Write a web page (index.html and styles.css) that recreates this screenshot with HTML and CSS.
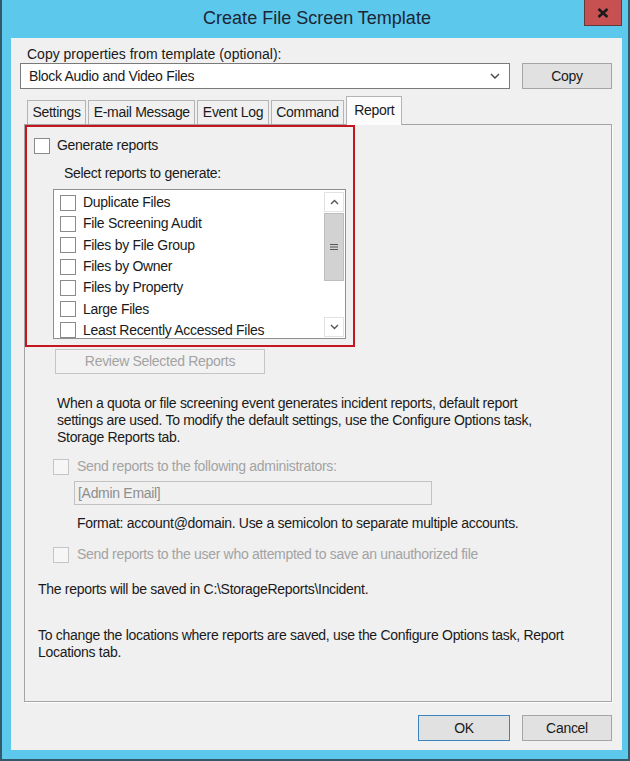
FILE: index.html
```html
<!DOCTYPE html>
<html lang="en">
<head>
    <meta charset="UTF-8">
    <title>Create File Screen Template</title>
    <link rel="stylesheet" href="styles.css">
</head>
<body>

    <!-- Dialog frame -->
    <div class="window">
        <div class="titlebar">
            <span class="title">Create File Screen Template</span>
            <div class="close-btn">
                <svg width="12" height="10" viewBox="0 0 12 10">
                    <path d="M1.5 1 L10.5 9 M10.5 1 L1.5 9" stroke="#1b1b1b" stroke-width="2.6" fill="none"/>
                </svg>
            </div>
        </div>

        <div class="client">
            <div class="copy-label">Copy properties from template (optional):</div>
            <div class="copy-row">
                <div class="combo">
                    <span>Block Audio and Video Files</span>
                    <svg width="10" height="6" viewBox="0 0 10 6">
                        <path d="M1 1 L5 5 L9 1" stroke="#444" stroke-width="1.4" fill="none"/>
                    </svg>
                </div>
                <div class="btn copy-btn">Copy</div>
            </div>

            <!-- Tabs -->
            <div class="tabs">
                <div class="tab">Settings</div>
                <div class="tab">E-mail Message</div>
                <div class="tab">Event Log</div>
                <div class="tab">Command</div>
                <div class="tab active">Report</div>
            </div>

            <div class="panel">
                <div class="highlight">
                    <div class="check-row">
                        <span class="checkbox"></span>
                        <span>Generate reports</span>
                    </div>
                    <div class="select-label">Select reports to generate:</div>

                    <div class="listbox">
                        <div class="list-items">
                            <div class="list-item"><span class="checkbox"></span>Duplicate Files</div>
                            <div class="list-item"><span class="checkbox"></span>File Screening Audit</div>
                            <div class="list-item"><span class="checkbox"></span>Files by File Group</div>
                            <div class="list-item"><span class="checkbox"></span>Files by Owner</div>
                            <div class="list-item"><span class="checkbox"></span>Files by Property</div>
                            <div class="list-item"><span class="checkbox"></span>Large Files</div>
                            <div class="list-item"><span class="checkbox"></span>Least Recently Accessed Files</div>
                        </div>
                        <div class="scrollbar">
                            <div class="sb-btn">
                                <svg width="9" height="6" viewBox="0 0 9 6">
                                    <path d="M1 5 L4.5 1.5 L8 5" stroke="#555" stroke-width="1.4" fill="none"/>
                                </svg>
                            </div>
                            <div class="sb-thumb">
                                <svg width="8" height="8" viewBox="0 0 8 8">
                                    <path d="M0 1.5 H8 M0 4 H8 M0 6.5 H8" stroke="#555" stroke-width="1.2"/>
                                </svg>
                            </div>
                            <div class="sb-track"></div>
                            <div class="sb-btn">
                                <svg width="9" height="6" viewBox="0 0 9 6">
                                    <path d="M1 1 L4.5 4.5 L8 1" stroke="#555" stroke-width="1.4" fill="none"/>
                                </svg>
                            </div>
                        </div>
                    </div>
                </div>

                <div class="btn disabled review-btn">Review Selected Reports</div>

                <p class="info">
                    When a quota or file screening event generates incident reports, default report<br>
                    settings are used. To modify the default settings, use the Configure Options task,<br>
                    Storage Reports tab.
                </p>

                <div class="check-row disabled admin-row">
                    <span class="checkbox"></span>
                    <span>Send reports to the following administrators:</span>
                </div>
                <div class="textbox">[Admin Email]</div>
                <div class="format-note">Format: account@domain. Use a semicolon to separate multiple accounts.</div>

                <div class="check-row disabled user-row">
                    <span class="checkbox"></span>
                    <span>Send reports to the user who attempted to save an unauthorized file</span>
                </div>

                <div class="saved-note">The reports will be saved in C:\StorageReports\Incident.</div>
                <div class="locations-note">
                    To change the locations where reports are saved, use the Configure Options task, Report<br>
                    Locations tab.
                </div>
            </div>

            <div class="footer">
                <div class="btn default ok-btn">OK</div>
                <div class="btn cancel-btn">Cancel</div>
            </div>
        </div>
    </div>

</body>
</html>
```

FILE: styles.css
```css
/* ===== General ===== */
body {
    margin: 0;
    font-family: "Liberation Sans", Arial, sans-serif;
    font-size: 14px;
    letter-spacing: -0.3px;
    line-height: 17px;
    color: #1a1a1a;
}

/* ===== Window frame ===== */
.window {
    width: 630px;
    height: 761px;
    box-sizing: border-box;
    background: #5cc8ec;
    border: 2px solid #34596b;
    border-top: none;
    display: flex;
    flex-direction: column;
}

.titlebar {
    height: 38px;
    position: relative;
    display: flex;
    justify-content: center;
    align-items: center;
}

.title {
    font-size: 18px;
    letter-spacing: 0;
    color: #1d2535;
    padding: 0 0 1px 4px;
}

.close-btn {
    position: absolute;
    top: 0;
    right: 6px;
    width: 38px;
    height: 26px;
    box-sizing: border-box;
    background: #c75050;
    border: 1px solid #5f3a3a;
    border-top: none;
    display: flex;
    justify-content: center;
    align-items: center;
}

.client {
    flex: 1;
    margin: 0 6px 9px 9px;
    background: #f0f0f0;
    padding: 8px 10px 0 9px;
}

/* ===== Copy row ===== */
.copy-label {
    margin-left: 7px;
    letter-spacing: 0;
}

.copy-row {
    display: flex;
    gap: 12px;
    height: 26px;
}

.combo {
    width: 490px;
    box-sizing: border-box;
    background: #fff;
    border: 1px solid #7a7a7a;
    display: flex;
    align-items: center;
    justify-content: space-between;
    padding: 0 9px 0 8px;
}

.btn {
    box-sizing: border-box;
    background: #e1e1e1;
    border: 1px solid #a5a5a5;
    display: flex;
    align-items: center;
    justify-content: center;
}

.copy-btn {
    width: 90px;
}

/* ===== Tabs ===== */
.tabs {
    display: flex;
    align-items: flex-end;
    gap: 2px;
    height: 28px;
    margin: 7px 0 0 7px;
    position: relative;
    z-index: 1;
}

.tab {
    height: 24px;
    box-sizing: border-box;
    padding: 0 4.5px;
    border: 1px solid #b4b4b4;
    border-bottom: none;
    background: #f0f0f0;
    display: flex;
    align-items: center;
}

.tab.active {
    height: 29px;
    margin-bottom: -1px;
    background: #fcfcfc;
    align-items: flex-start;
    padding: 5px 7px 0;
}

/* ===== Tab page ===== */
.panel {
    height: 578px;
    box-sizing: border-box;
    margin-left: 4px;
    border: 1px solid #a4a4a4;
    box-shadow: 1px 1px 0 #fff;
}

.highlight {
    width: 330px;
    height: 222px;
    box-sizing: border-box;
    border: 2px solid #c3161f;
    padding: 10px 7px 0;
}

.check-row {
    display: flex;
    align-items: center;
    gap: 7px;
    height: 17px;
}

.checkbox {
    width: 16px;
    height: 16px;
    box-sizing: border-box;
    background: #fff;
    border: 1px solid #8a8a8a;
    flex-shrink: 0;
}

.select-label {
    margin: 11px 0 0 30px;
}

.listbox {
    margin: 7px 0 0 19px;
    height: 150px;
    box-sizing: border-box;
    background: #fff;
    border: 1px solid #8c8f94;
    display: flex;
    overflow: hidden;
}

.list-items {
    flex: 1;
    padding-top: 2px;
    overflow: hidden;
}

.list-item {
    height: 21.3px;
    display: flex;
    align-items: center;
    gap: 7px;
    padding-left: 6px;
    white-space: nowrap;
}

/* ===== Scrollbar ===== */
.scrollbar {
    width: 21px;
    display: flex;
    flex-direction: column;
    padding: 2px 1px 1px 0;
    box-sizing: border-box;
}

.sb-btn {
    height: 20px;
    box-sizing: border-box;
    border: 1px solid #e2e2e2;
    display: flex;
    align-items: center;
    justify-content: center;
}

.sb-thumb {
    height: 68px;
    margin-top: 1px;
    box-sizing: border-box;
    background: #d2d2d2;
    border: 1px solid #bdbdbd;
    display: flex;
    align-items: center;
    justify-content: center;
}

.sb-track {
    flex: 1;
}

/* ===== Lower part ===== */
.btn.disabled {
    color: #a3a3a3;
    background: #f2f2f2;
    border-color: #c4c4c4;
}

.review-btn {
    width: 210px;
    height: 25px;
    margin: 2px 0 0 30px;
}

.info {
    margin: 21px 0 0 32px;
}

.check-row.disabled {
    color: #a3a3a3;
    gap: 8px;
}

.check-row.disabled .checkbox {
    background: #f6f6f6;
    border-color: #c6c6c6;
}

.admin-row {
    margin: 12px 0 0 28px;
}

.textbox {
    width: 358px;
    height: 24px;
    box-sizing: border-box;
    margin: 6px 0 0 49px;
    border: 1px solid #c2c2c2;
    color: #8e8e8e;
    padding-left: 3px;
    display: flex;
    align-items: center;
}

.format-note {
    margin: 10px 0 0 52px;
}

.user-row {
    margin: 14px 0 0 28px;
}

.saved-note {
    margin: 18px 0 0 13px;
}

.locations-note {
    margin: 29px 0 0 13px;
}

/* ===== Footer buttons ===== */
.footer {
    display: flex;
    justify-content: flex-end;
    gap: 12px;
    margin-top: 13px;
}

.footer .btn {
    height: 26px;
}

.ok-btn {
    width: 92px;
}

.btn.default {
    border-color: #3c83c0;
}

.cancel-btn {
    width: 90px;
}
```
